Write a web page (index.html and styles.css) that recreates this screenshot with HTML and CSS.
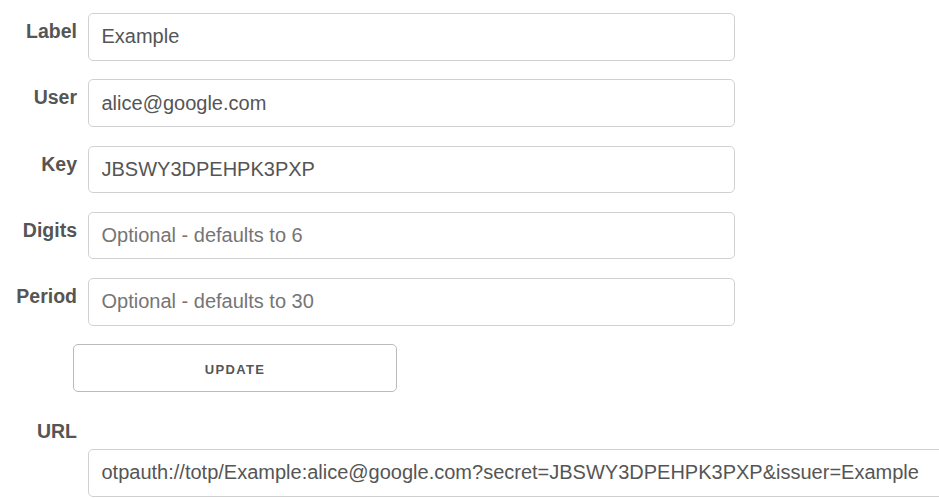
FILE: index.html
```html
<!DOCTYPE html>
<html>
<head>
<meta charset="utf-8">
<link rel="stylesheet" href="styles.css">
</head>
<body>
<form class="form">
  <div class="row">
    <label class="lbl">Label</label>
    <input class="field" type="text" value="Example">
  </div>
  <div class="row">
    <label class="lbl">User</label>
    <input class="field" type="text" value="alice@google.com">
  </div>
  <div class="row">
    <label class="lbl">Key</label>
    <input class="field" type="text" value="JBSWY3DPEHPK3PXP">
  </div>
  <div class="row">
    <label class="lbl">Digits</label>
    <input class="field" type="text" placeholder="Optional - defaults to 6">
  </div>
  <div class="row">
    <label class="lbl">Period</label>
    <input class="field" type="text" placeholder="Optional - defaults to 30">
  </div>
  <div class="btnrow">
    <button class="btn" type="button">Update</button>
  </div>
  <div class="urlblock">
    <label class="lbl url-lbl">URL</label>
    <input class="field url-field" type="text" value="otpauth://totp/Example:alice@google.com?secret=JBSWY3DPEHPK3PXP&amp;issuer=Example">
  </div>
</form>
</body>
</html>
```
FILE: styles.css
```css
html, body {
  margin: 0;
  padding: 0;
  overflow: hidden;
  background: #fff;
}
body {
  font-family: "Liberation Sans", Arial, sans-serif;
  color: #555;
}
.form {
  padding-top: 13px;
  display: flex;
  flex-direction: column;
}
.row {
  display: flex;
  align-items: flex-start;
  gap: 11px;
  margin-bottom: 18.75px;
}
.lbl {
  width: 77px;
  text-align: right;
  font-weight: bold;
  font-size: 19.5px;
  line-height: 19.5px;
  padding-top: 9px;
  color: #555;
  flex: none;
}
.field {
  box-sizing: border-box;
  width: 647px;
  height: 47.5px;
  padding: 6px 12.5px;
  border: 1px solid #d1d1d1;
  border-radius: 5px;
  font-family: "Liberation Sans", Arial, sans-serif;
  font-size: 20px;
  color: #555;
  background: #fff;
  margin: 0;
  outline: none;
}
.field::placeholder {
  color: #757575;
  opacity: 1;
}
.btnrow {
  padding-left: 73px;
  display: flex;
}
.btn {
  box-sizing: border-box;
  width: 324px;
  height: 47.5px;
  border: 1px solid #bbb;
  border-radius: 5px;
  background: transparent;
  font-family: "Liberation Sans", Arial, sans-serif;
  font-size: 13px;
  font-weight: bold;
  letter-spacing: 1.3px;
  text-transform: uppercase;
  color: #555;
  padding: 3px 0 0 0;
  margin: 0;
}
.urlblock {
  display: flex;
  flex-direction: column;
  padding-top: 29.75px;
}
.url-lbl {
  padding-top: 0;
  margin-bottom: 8px;
  line-height: 19.5px;
}
.url-field {
  margin-left: 88px;
  width: 900px;
  flex: none;
}
```
